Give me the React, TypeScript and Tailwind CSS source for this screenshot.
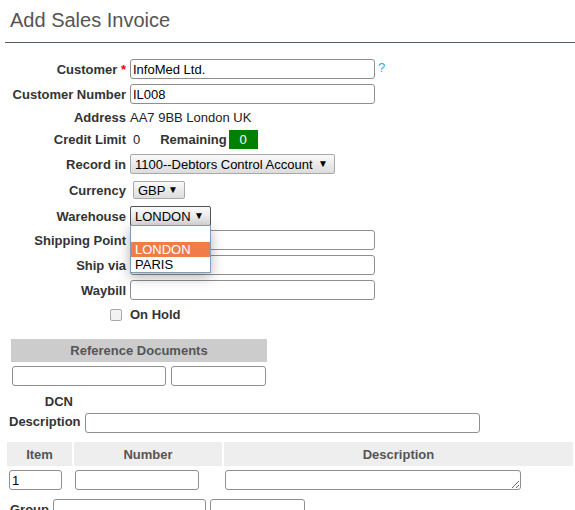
import React from "react";

const inputCls =
  "h-[20px] border border-[#8f8f8f] rounded-[3px] bg-white px-[2px] text-[13px] text-black outline-none font-['Liberation_Sans',Arial,sans-serif]";

function Row({
  label,
  children,
  h = "h-[20px]",
  mt = "mt-[5px]",
}: {
  label: React.ReactNode;
  children?: React.ReactNode;
  h?: string;
  mt?: string;
}) {
  return (
    <div className={`flex items-center ${h} ${mt}`}>
      <div className="w-[126px] shrink-0 text-right font-bold text-[#333] whitespace-nowrap">
        {label}
      </div>
      <div className="ml-[4px] flex items-center relative">{children}</div>
    </div>
  );
}

function Select({
  value,
  w,
  h = "h-[20px]",
  focused = false,
}: {
  value: string;
  w: string;
  h?: string;
  focused?: boolean;
}) {
  return (
    <div
      className={`${w} ${h} flex items-center justify-between pl-[4px] pr-[6px] rounded-[2px] border ${
        focused ? "border-[#555]" : "border-[#a9a9a9]"
      } bg-gradient-to-b from-[#fafafa] to-[#dcdcdc] text-black whitespace-nowrap`}
    >
      <span>{value}</span>
      <span className="text-[10px] leading-none">▼</span>
    </div>
  );
}

export default function App() {
  return (
    <div className="w-[575px] h-[510px] overflow-hidden bg-white font-['Liberation_Sans',Arial,sans-serif] text-[13px] text-[#333] leading-[15px]">
      <h1 className="pl-[10px] pt-[8px] text-[20px] leading-[24px] text-[#555] font-normal">
        Add Sales Invoice
      </h1>
      <div className="ml-[5px] mt-[10px] border-t border-[#555c62]" />

      <div className="mt-[16px]">
        <Row
          label={
            <>
              Customer <span className="text-[#e00]">*</span>
            </>
          }
          mt="mt-0"
        >
          <input className={`${inputCls} w-[245px]`} defaultValue="InfoMed Ltd." />
          <span className="ml-[3px] text-[#33aadd] -mt-[3px]">?</span>
        </Row>
        <Row label="Customer Number">
          <input className={`${inputCls} w-[245px]`} defaultValue="IL008" />
        </Row>
        <Row label="Address" h="h-[15px]" mt="mt-[6px]">
          <span className="text-[#222]">AA7 9BB London UK</span>
        </Row>
        <Row label="Credit Limit" mt="mt-[4px]">
          <span className="ml-[3px] text-[#222]">0</span>
          <span className="ml-[20px] font-bold">Remaining</span>
          <span className="ml-[2px] w-[29px] h-[19px] bg-[#008000] text-white flex items-center justify-center">
            0
          </span>
        </Row>
        <Row label="Record in" mt="mt-[5px]">
          <Select value="1100--Debtors Control Account" w="w-[205px]" />
        </Row>
        <Row label="Currency" h="h-[18px]" mt="mt-[7px]">
          <div className="ml-[3px]">
            <Select value="GBP" w="w-[52px]" h="h-[18px]" />
          </div>
        </Row>
        <Row label="Warehouse" mt="mt-[7px]">
          <Select value="LONDON" w="w-[81px]" focused />
          <div className="absolute left-0 top-[19px] z-10 w-[81px] border border-[#7f9db9] bg-white shadow-[0_4px_12px_rgba(0,0,0,0.3)] text-black">
            <div className="h-[16px]" />
            <div className="h-[15px] pl-[4px] bg-[#f07c4a] text-white leading-[15px]">LONDON</div>
            <div className="h-[15px] pl-[4px] leading-[15px]">PARIS</div>
          </div>
        </Row>
        <Row label="Shipping Point" mt="mt-[4px]">
          <input className={`${inputCls} w-[245px]`} />
        </Row>
        <Row label="Ship via">
          <input className={`${inputCls} w-[245px]`} />
        </Row>
        <Row label="Waybill">
          <input className={`${inputCls} w-[245px]`} />
        </Row>
        <div className="flex items-center h-[15px] mt-[7px]">
          <div className="w-[126px] shrink-0 flex justify-end pr-[4px]">
            <span className="w-[12px] h-[12px] rounded-[2px] border border-[#a9a9a9] bg-[#f2f2f2]" />
          </div>
          <span className="ml-[4px] font-bold">On Hold</span>
        </div>
      </div>

      {/* Reference documents */}
      <div className="ml-[11px] mt-[17px] w-[256px]">
        <div className="h-[23px] bg-[#cccccc] text-[#555] font-bold flex items-center justify-center">
          Reference Documents
        </div>
        <div className="flex mt-[4px] pl-[1px] gap-[5px]">
          <input className={`${inputCls} w-[154px]`} />
          <input className={`${inputCls} w-[95px]`} />
        </div>
      </div>

      <div className="mt-[9px] ml-[9px] w-[64px] text-right font-bold h-[14px] leading-[14px]">
        DCN
      </div>
      <div className="flex items-start mt-[4px] h-[20px]">
        <div className="ml-[9px] mt-[1px] w-[64px] text-right font-bold">Description</div>
        <input className={`${inputCls} ml-[12px] w-[395px]`} />
      </div>

      {/* Items table */}
      <div className="ml-[7px] mt-[9px] flex gap-[2px] h-[24px] text-[#555] font-bold">
        <div className="w-[65px] bg-[#eeeeee] flex items-center justify-center">Item</div>
        <div className="w-[148px] bg-[#eeeeee] flex items-center justify-center">Number</div>
        <div className="w-[349px] bg-[#eeeeee] flex items-center justify-center">Description</div>
      </div>
      <div className="flex items-start mt-[4px] h-[20px]">
        <input className={`${inputCls} ml-[9px] w-[53px]`} defaultValue="1" />
        <input className={`${inputCls} ml-[13px] w-[124px]`} />
        <textarea
          className={`${inputCls} ml-[26px] w-[296px] resize block`}
          rows={1}
        />
      </div>
      <div className="flex items-start mt-[9px]">
        <span className="ml-[10px] mt-[3px] font-bold">Group</span>
        <input className={`${inputCls} ml-[4px] w-[153px]`} />
        <input className={`${inputCls} ml-[4px] w-[95px]`} />
      </div>
    </div>
  );
}
